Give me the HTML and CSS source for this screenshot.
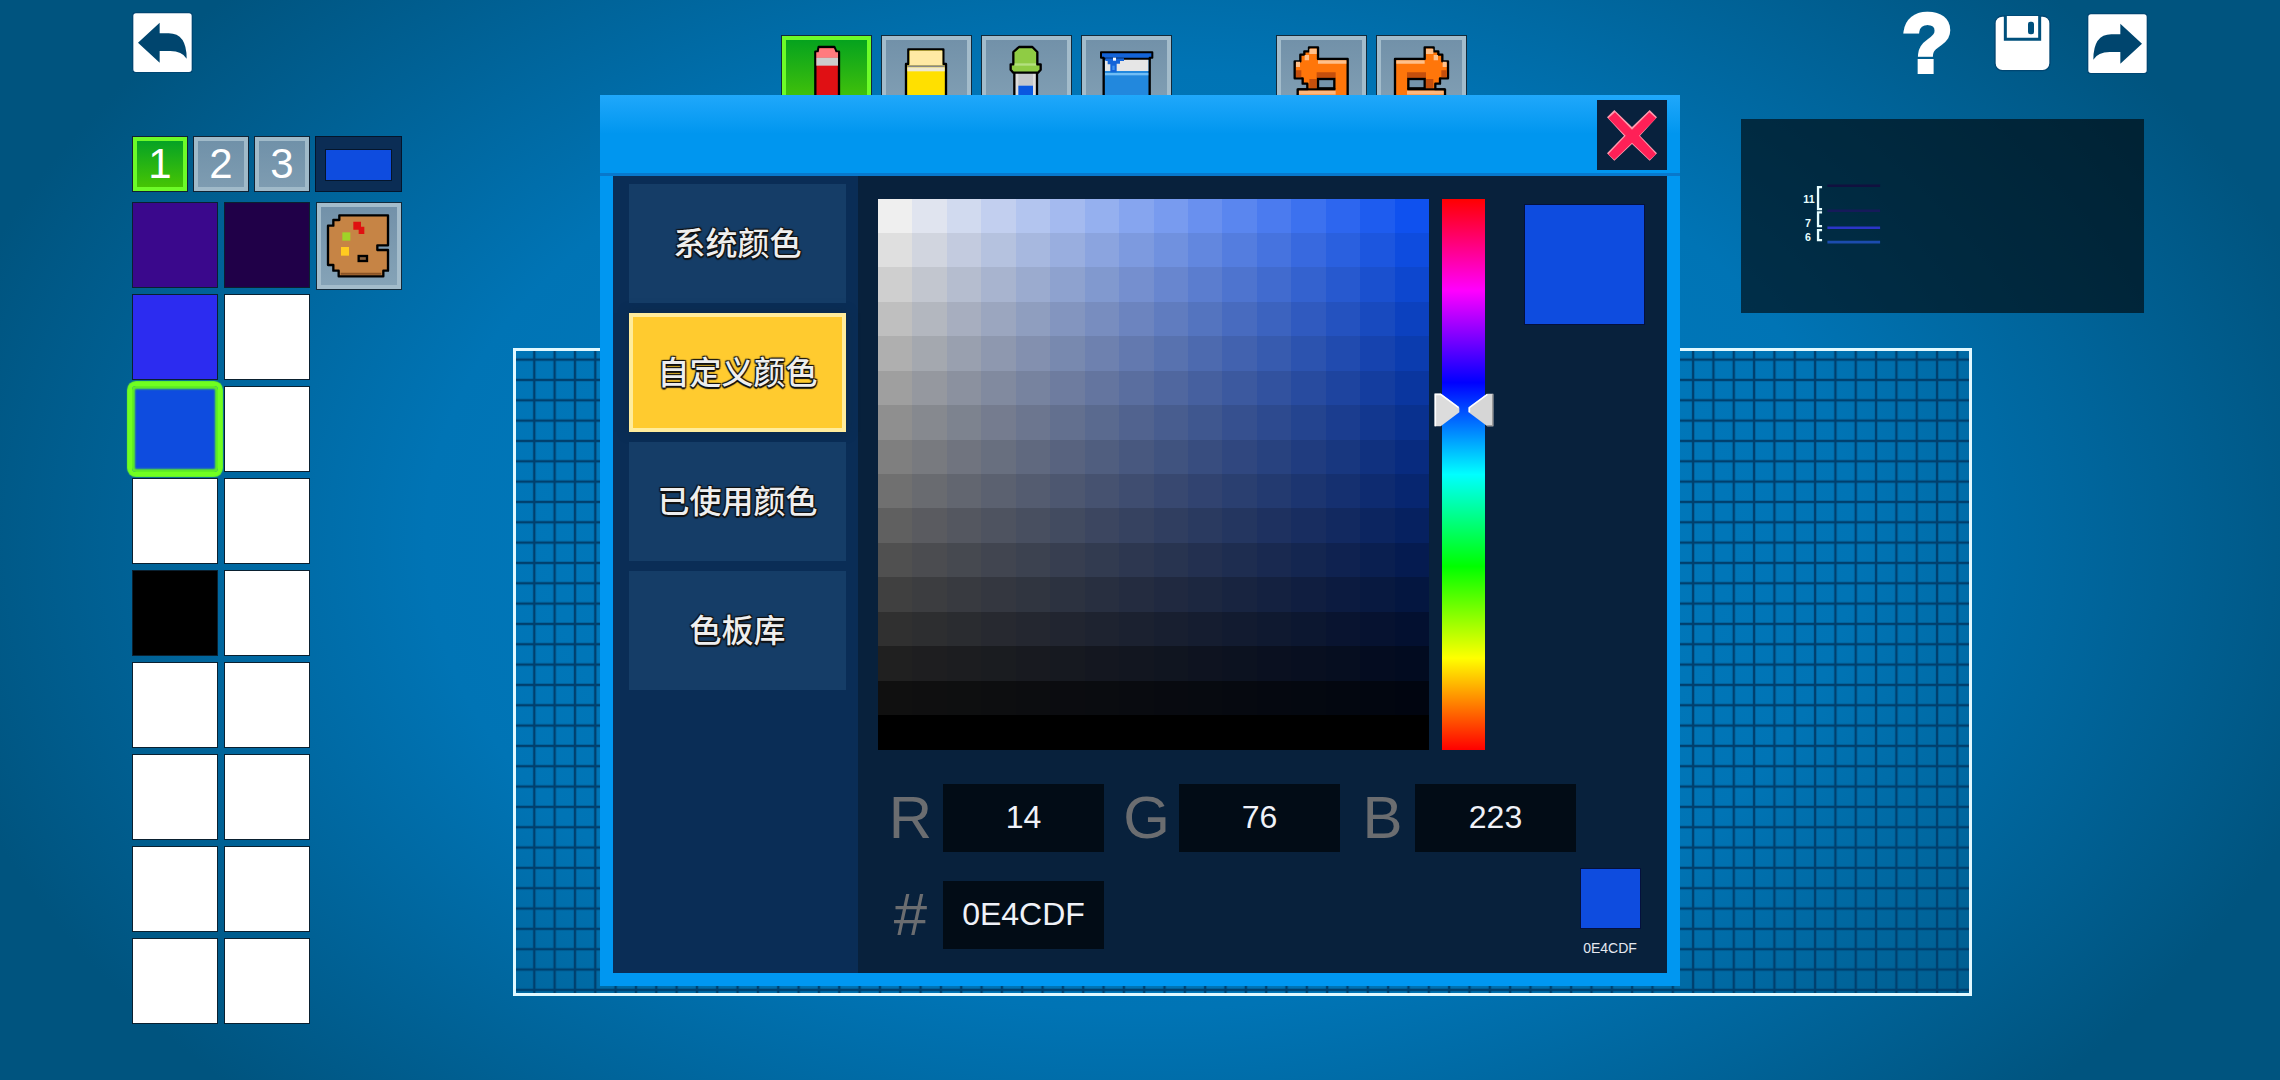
FILE: index.html
```html
<!DOCTYPE html>
<html lang="zh-CN">
<head>
    <meta charset="UTF-8">
    <meta name="viewport" content="width=device-width, initial-scale=1.0">
    <title>Pixel Editor</title>
    <link rel="stylesheet" href="styles.css">
</head>
<body>
    <div class="editor">
        <aside class="sidebar">
            <button class="icon-btn" aria-label="Back">
                <svg viewBox="95 37 183 183"><rect x="97" y="39" width="179" height="180" rx="10" fill="#fff" stroke="#004672" stroke-width="4"/><path d="M113 129 178 69V101H205Q259 101 259 177Q245 154 210 154H178V189Z" fill="#00456e"/></svg>
            </button>

            <div class="palette-tabs">
                <button class="num active">1</button>
                <button class="num">2</button>
                <button class="num">3</button>
                <div class="current"><div class="current-color"></div></div>
            </div>

            <div class="palette">
                <div class="swatches" id="swatches"></div>
                <button class="tool palette-btn" aria-label="Palette">
                    <svg viewBox="650 609 258 264">
                        <path d="M720 649H866V739H834V753H866V815H852V832H718V815H702V798H686V680H702V663H720Z" fill="#c68445" stroke="#000" stroke-width="7" stroke-linejoin="round"/>
                        <path d="M762 668H785V683H795V705H778V692H762Z" fill="#e01010"/>
                        <rect x="729" y="700" width="24" height="25" fill="#a0d428"/>
                        <rect x="725" y="744" width="24" height="26" fill="#ffcb20"/>
                        <rect x="778" y="771" width="25" height="15" fill="#856040" stroke="#000" stroke-width="7"/>
                        <path d="M724 824H846" stroke="#8a5427" stroke-width="6"/>
                    </svg>
                </button>
            </div>
        </aside>

        <main class="main">
            <div class="top">
                <div class="toolbar">
                    <button class="tool active" aria-label="Pencil">
                        <svg viewBox="62 46 273 273">
                            <path d="M175 82H222L228 96H236V260L200 300 165 260V96H172Z" fill="#e01014" stroke="#000" stroke-width="7" stroke-linejoin="round"/>
                            <path d="M177 86H221L226 98H233V114H168V98H175Z" fill="#ff7a7e"/>
                            <rect x="168" y="114" width="65" height="24" fill="#ccc"/>
                        </svg>
                    </button>
                    <button class="tool" aria-label="Eraser">
                        <svg viewBox="365 46 273 273">
                            <path d="M447 89H552V133H560V290H440V133H447Z" fill="#ffe000" stroke="#000" stroke-width="7" stroke-linejoin="round"/>
                            <rect x="451" y="93" width="98" height="44" fill="#ffe9a4"/>
                            <rect x="444" y="137" width="112" height="6" fill="#888"/>
                            <rect x="444" y="143" width="112" height="12" fill="#eee8d0"/>
                        </svg>
                    </button>
                    <button class="tool" aria-label="Color picker">
                        <svg viewBox="664 46 273 273">
                            <path d="M764 156H832V290H764Z" fill="#ddd" stroke="#000" stroke-width="7"/>
                            <rect x="776" y="158" width="44" height="40" fill="#c4c8cc"/>
                            <rect x="776" y="198" width="44" height="80" fill="#0a58e0"/>
                            <path d="M778 82H818L833 97V134H843V150L835 159H761L753 150V134H761V97Z" fill="#8fcc44" stroke="#000" stroke-width="7" stroke-linejoin="round"/>
                            <rect x="765" y="131" width="64" height="7" fill="#b4e080"/>
                        </svg>
                    </button>
                    <button class="tool" aria-label="Fill">
                        <svg viewBox="963 46 273 273">
                            <path d="M1031 116H1169V290H1031Z" fill="#2288dd" stroke="#000" stroke-width="7"/>
                            <rect x="1035" y="118" width="130" height="36" fill="#e6e6e6"/>
                            <rect x="1035" y="160" width="130" height="7" fill="#70bdf5"/>
                            <path d="M1023 98H1177V114H1169V117H1031V114H1023Z" fill="#1464d8" stroke="#000" stroke-width="6" stroke-linejoin="round"/>
                            <path d="M1036 116H1092V124H1080V132H1070V158H1051V134H1043V124H1036Z" fill="#1464d8"/>
                            <rect x="1059" y="114" width="9" height="9" fill="#fff"/>
                            <rect x="1057" y="138" width="7" height="13" fill="#3f91ee"/>
                        </svg>
                    </button>
                    <button class="tool history" aria-label="Undo">
                        <svg viewBox="48 46 273 273">
                            <g id="undo-icon">
                                <path d="M147 83H174V118H263V290H113V209H142V192H128V176H104V125H121V105H133V95H147Z" fill="#ff760a" stroke="#000" stroke-width="7" stroke-linejoin="round"/>
                                <path d="M148 87H170V103H148ZM134 106H147V122H134ZM108 126H120V142H108ZM174 122H259V132H174Z" fill="#ffc08a"/>
                                <path d="M108 152H124V173H108ZM148 178H170V206H148ZM170 158H227V175H170Z" fill="#c54f0c"/>
                                <rect x="174" y="178" width="49" height="28" fill="#7594ab" stroke="#000" stroke-width="7"/>
                                <path d="M113 209H226" stroke="#000" stroke-width="7"/>
                                <rect x="117" y="213" width="110" height="12" fill="#ffb77c"/>
                            </g>
                        </svg>
                    </button>
                    <button class="tool" aria-label="Redo">
                        <svg viewBox="48 46 273 273"><use href="#undo-icon" transform="matrix(-1 0 0 1 368 0)"/></svg>
                    </button>
                </div>

                <div class="corner">
                    <div class="actions">
                        <button class="icon-btn help" aria-label="Help">?</button>
                        <button class="icon-btn save" aria-label="Save">
                            <svg viewBox="405 45 171 171">
                                <rect x="408" y="48" width="165" height="164" rx="22" fill="#fff" stroke="#004672" stroke-width="4"/>
                                <path d="M439 48V118H542V48" fill="#fff" stroke="#00507c" stroke-width="9"/>
                                <rect x="507" y="65" width="18" height="38" rx="7" fill="#00507c"/>
                            </svg>
                        </button>
                        <button class="icon-btn" aria-label="Share">
                            <svg viewBox="682 37 183 183"><rect x="684" y="39" width="179" height="180" rx="10" fill="#fff" stroke="#004672" stroke-width="4"/><path d="M847 129 782 69V101H755Q701 101 701 177Q715 154 750 154H782V189Z" fill="#00456e"/></svg>
                        </button>
                    </div>
                    <div class="preview">
                        <svg viewBox="33 27 1208 581">
                            <path d="M276 231H264V297H276M276 307H264V348H276M276 360H264V390H276" fill="none" stroke="#e8ffff" stroke-width="7"/>
                            <path d="M292 227H450" stroke="#11103f" stroke-width="7"/>
                            <path d="M292 302H450" stroke="#161a5a" stroke-width="8"/>
                            <path d="M292 353H450" stroke="#2b35c8" stroke-width="8"/>
                            <path d="M292 396H450" stroke="#1c4cae" stroke-width="8"/>
                            <g fill="#e8ffff">
                                <text x="220" y="278">11</text>
                                <text x="225" y="350">7</text>
                                <text x="225" y="392">6</text>
                            </g>
                        </svg>
                    </div>
                </div>
            </div>

            <div class="board">
                <svg width="100%" height="100%">
                    <defs>
                        <pattern id="cells" x="16.3" y="6.7" width="20.33" height="20.33" patternUnits="userSpaceOnUse">
                            <path d="M0 2H20.33M2 0V20.33" stroke="#00406e" stroke-width="2.4"/>
                        </pattern>
                    </defs>
                    <rect width="100%" height="100%" fill="url(#cells)"/>
                </svg>
            </div>
        </main>
    </div>

    <div class="overlay">
        <div class="dialog" role="dialog" aria-label="自定义颜色">
            <div class="dialog-head">
                <button class="close" aria-label="Close">
                    <svg viewBox="1010 240 210 208">
                        <path d="M1062 269 1115 320 1168 269 1190 291 1139 346 1190 399 1168 421 1115 371 1062 421 1040 399 1091 346 1040 291Z" fill="#ff9aae"/>
                        <path d="M1064 276 1115 328 1167 276 1187 294 1136 346 1187 402 1168 418 1115 367 1062 418 1044 402 1096 346 1044 294Z" fill="#ff2057"/>
                    </svg>
                </button>
            </div>

            <div class="dialog-body">
                <nav class="tabs">
                    <button class="tab">系统颜色</button>
                    <button class="tab active">自定义颜色</button>
                    <button class="tab">已使用颜色</button>
                    <button class="tab">色板库</button>
                </nav>

                <div class="pane">
                    <div class="picker">
                        <div class="shades" id="shades"></div>
                        <div class="hue">
                            <input type="range" id="hue" min="0" max="360" value="138" aria-label="Hue">
                            <svg class="hue-marker" viewBox="163 668 180 102">
                                <path d="M165 670H183L239 712V726L183 768H165Z" fill="#dcdcdc"/>
                                <path d="M167 768V672H183L237 712" fill="none" stroke="#fff" stroke-width="5"/>
                                <path d="M341 670H323L267 712V726L323 768H341Z" fill="#d6d6d6"/>
                                <path d="M269 726V712L323 672" fill="none" stroke="#fff" stroke-width="5"/>
                                <path d="M339 672V766H322" fill="none" stroke="#999" stroke-width="4"/>
                            </svg>
                        </div>
                        <div class="chosen"></div>
                    </div>

                    <div class="values">
                        <form class="fields">
                            <div class="field-row">
                                <label for="r">R</label><input type="text" id="r" value="14">
                                <label for="g">G</label><input type="text" id="g" value="76">
                                <label for="b">B</label><input type="text" id="b" value="223">
                            </div>
                            <div class="field-row">
                                <label for="hex">#</label><input type="text" id="hex" value="0E4CDF">
                            </div>
                        </form>
                        <div class="used">
                            <div class="used-color"></div>
                            <span>0E4CDF</span>
                        </div>
                    </div>
                </div>
            </div>
        </div>
    </div>

    <script>
        // Palette colors, two per row
        var colors = ['#3a088c', '#200048', '#2c2cf0', '#fff', '#0e4cdf', '#fff', '#fff', '#fff', '#000'];
        var swatches = document.getElementById('swatches');
        for (var i = 0; i < 18; i++) {
            var swatch = document.createElement('button');
            swatch.className = i === 4 ? 'swatch selected' : 'swatch';
            swatch.setAttribute('aria-label', 'Color ' + (i + 1));
            swatch.style.background = colors[i] || '#fff';
            swatches.appendChild(swatch);
        }

        // 16x16 shades of the current hue
        var hue = [0, 0.2967, 1];
        var shades = document.getElementById('shades');
        for (var row = 0; row < 16; row++) {
            for (var col = 0; col < 16; col++) {
                var v = (15 - row) / 15 * 239;
                var rgb = hue.map(function(c) {
                    return Math.round(v * (1 - col / 16 * (1 - c)));
                });
                var cell = document.createElement('div');
                cell.style.background = 'rgb(' + rgb.join(',') + ')';
                shades.appendChild(cell);
            }
        }
    </script>
</body>
</html>
```
FILE: styles.css
```css
* { box-sizing: border-box; }
html, body { height: 100%; }
body {
    margin: 0;
    overflow: hidden;
    font-family: "Liberation Sans", "Noto Sans CJK SC", sans-serif;
    background: radial-gradient(ellipse 54% 75% at center, #007fc6 0%, #0074b5 58%, #00547f 100%);
}
button { padding: 0; border: none; background: none; color: white; font-family: inherit; cursor: pointer; }
svg { display: block; }

.editor { display: flex; min-height: 100vh; }

/* Left side: palette */
.sidebar { width: 513px; padding: 12px 0 0 132px; }
.icon-btn { display: block; width: 61px; height: 61px; }
.icon-btn svg { width: 100%; height: 100%; }

.palette-tabs { display: flex; gap: 5px; margin-top: 63px; }
.num {
    width: 56px;
    height: 56px;
    border: 1px solid #123;
    background: linear-gradient(#6f90a8, #7f9db2);
    box-shadow: inset 0 0 0 4px #a0bac9;
    font-size: 42px;
    line-height: 52px;
}
.num.active { background: linear-gradient(#009f28, #4cc800); box-shadow: inset 0 0 0 4px #6dfb28; }
.current { width: 87px; height: 56px; padding: 12px 9px; border: 1px solid #04152b; background: #0b2d55; }
.current-color { height: 32px; border: 1px solid #04152b; background: #0e4cdf; }

.palette { display: flex; align-items: flex-start; gap: 6px; margin-top: 10px; }
.swatches { display: grid; grid-template-columns: 86px 86px; gap: 6px; }
.swatch { height: 86px; border: 1px solid #0a2030; }
.swatch.selected { border: none; border-radius: 4px; box-shadow: 0 0 1px 5px #70ff20, inset 0 0 2px 3px #60f020; }

.tool {
    width: 91px;
    height: 91px;
    background: linear-gradient(#7190a8, #86a4b8);
    box-shadow: inset 0 0 0 1px #122a3a, inset 0 0 0 5px #a3bccb;
}
.tool.active { background: linear-gradient(#00a020, #5fd000); box-shadow: inset 0 0 0 1px #122a3a, inset 0 0 0 5px #6dfb28; }
.tool svg { width: 100%; height: 100%; }
.palette-btn { width: 86px; height: 88px; }

/* Toolbar, corner buttons and drawing area */
.main { flex: 1; display: flex; flex-direction: column; }
.top { display: flex; justify-content: space-between; height: 348px; padding: 0 132px 0 268px; }
.toolbar { display: flex; gap: 9px; padding-top: 35px; }
.history { margin-left: 95px; }
.actions { display: flex; justify-content: flex-end; align-items: center; gap: 36px; height: 86px; }
.help { height: 86px; font: bold 84px/86px "Liberation Sans", sans-serif; -webkit-text-stroke: 4px white; }
.save { width: 57px; height: 57px; }
.preview { width: 403px; margin: 33px 4px 0 0; background: rgba(0, 0, 0, 0.6); }
.preview text { font: bold 32px "Liberation Sans", sans-serif; }
.board { flex: 1; margin: 0 308px 84px 0; border: 3px solid #e0f8ff; }

/* Color dialog */
.overlay { position: fixed; inset: 0; display: flex; align-items: center; justify-content: center; }
.dialog { width: 1080px; padding: 0 13px 13px; background: #0097f1; }
.dialog-head {
    display: flex;
    justify-content: flex-end;
    height: 81px;
    margin: 0 -13px;
    padding: 5px 13px 0 0;
    background: linear-gradient(#20a8fb, #0096ef 50%);
    border-bottom: 3px solid #0878cc;
}
.close { width: 70px; height: 70px; background: #08213d; }
.close svg { width: 100%; height: 100%; }
.dialog-body { display: flex; background: #08213c; }

.tabs { display: flex; flex: none; flex-direction: column; gap: 10px; width: 245px; padding: 8px 12px 0 16px; background: #0a2d56; }
.tab {
    height: 119px;
    padding-bottom: 4px;
    background: #153d67;
    color: #eee;
    font: 500 32px/32px "Noto Sans CJK SC", sans-serif;
    text-shadow: 1px 1px 1px #111, -1px -1px 1px #111, 1px -1px 1px #111, -1px 1px 1px #111, 0 2px 1px #111;
}
.tab.active { background: #ffcb2f; border: 4px solid #ffec9c; box-shadow: 0 0 10px #0c2a45; }

.pane { flex: 1; padding: 23px 29px 15px 20px; }
.picker { display: flex; }
.shades { display: grid; flex: none; grid-template: repeat(16, 1fr) / repeat(16, 1fr); width: 551px; height: 551px; }
.hue { position: relative; width: 43px; margin-left: 13px; }
.hue input {
    appearance: none;
    display: block;
    width: 43px;
    height: 551px;
    margin: 0;
    writing-mode: vertical-lr;
    background: linear-gradient(#f00, #f0f, #00f, #0ff, #0f0, #ff0, #f00);
}
.hue input::-webkit-slider-thumb { appearance: none; width: 43px; height: 1px; background: none; }
.hue-marker { position: absolute; top: 194px; left: -8px; width: 60px; height: 34px; pointer-events: none; }
.chosen { width: 121px; height: 121px; margin: 5px 0 0 39px; border: 1px solid #04103c; background: #0e4cdf; }

.values { display: flex; justify-content: space-between; align-items: flex-end; margin-top: 34px; }
.fields { padding-bottom: 9px; }
.field-row { display: flex; align-items: center; margin-bottom: 29px; }
.field-row:last-child { margin-bottom: 0; }
.field-row label { width: 65px; color: #6b6d70; font-size: 60px; line-height: 68px; text-align: center; }
.field-row input {
    width: 161px;
    height: 68px;
    margin-right: 10px;
    padding: 0;
    border: none;
    background: #020c16;
    color: #f0f2f8;
    font: 32px "Liberation Sans", sans-serif;
    text-align: center;
}
.used { width: 70px; margin: 0 0 2px -20px; color: #e4e8f0; font-size: 14px; line-height: 16px; text-align: center; }
.used-color { width: 61px; height: 61px; margin: 0 auto 11px; border: 1px solid #04103c; background: #0e4cdf; }
```
